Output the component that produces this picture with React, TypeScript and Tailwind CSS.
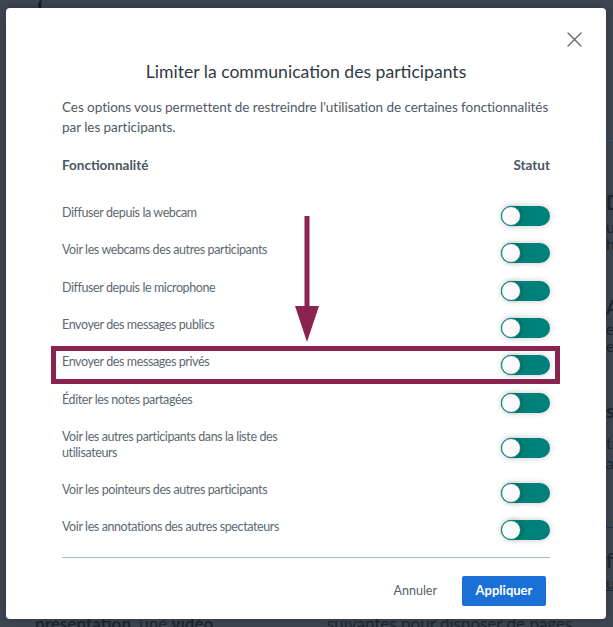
import React from "react";

const features: string[] = [
  "Diffuser depuis la webcam",
  "Voir les webcams des autres participants",
  "Diffuser depuis le microphone",
  "Envoyer des messages publics",
  "Envoyer des messages privés",
  "Éditer les notes partagées",
  "Voir les autres participants dans la liste des utilisateurs",
  "Voir les pointeurs des autres participants",
  "Voir les annotations des autres spectateurs",
];

function Toggle() {
  return (
    <span className="flex h-5 w-[49px] shrink-0 items-center rounded-full bg-[#00807a] shadow-[0_0_6px_rgba(0,0,0,0.22)]">
      <span className="h-5 w-5 rounded-full border border-[#00807a] bg-[#fafafa] shadow-[2px_0_4px_rgba(0,0,0,0.18)]" />
    </span>
  );
}

function CloseIcon() {
  return (
    <svg width="15" height="15" viewBox="0 0 15 15" fill="none" aria-hidden>
      <path d="M1 1L14 14M14 1L1 14" stroke="#5f6a74" strokeWidth="1.4" strokeLinecap="round" />
    </svg>
  );
}

function Backdrop() {
  return (
    <div className="flex h-full w-full text-[#1d2731]">
      <div className="flex w-[606px] shrink-0 flex-col justify-between">
        <div className="ml-[38px] h-[10px] w-[8px] rounded-l-full border-l-[3px] border-[#141c24]" />
        <div className="flex translate-y-[6px] items-end pl-[35px] text-[17px] leading-[18px]">
          <span className="w-[292px]">
            <b>présentation</b>, une <b>vidéo</b>,
          </span>
          <span>suivantes pour disposer de pages</span>
        </div>
      </div>
      <div className="flex flex-1 flex-col pt-[140px] text-[16px] leading-[17px]">
        <div className="h-px bg-[#2a5b72]" />
        <div className="mt-[50px] text-[20px] font-bold leading-[22px]">D</div>
        <div className="mt-[5px]">u</div>
        <div>h</div>
        <div className="mt-[44px] text-[19px] font-bold leading-[22px]">A</div>
        <div className="mt-[2px]">e</div>
        <div>e</div>
        <div className="mt-[46px] text-[19px] font-bold leading-[22px]">s</div>
        <div className="mt-[12px]">tr</div>
        <div className="mt-[3px]">a</div>
        <div className="mt-[56px] h-px bg-[#1b3a4a]" />
        <div className="mt-[20px] text-[21px] leading-[24px]">fo</div>
        <div className="mt-[2px] underline">u</div>
      </div>
    </div>
  );
}

export default function App() {
  return (
    <div
      className="relative h-[627px] w-[613px] overflow-hidden bg-[#3d4752]"
      style={{ fontFamily: "Lato, 'Noto Sans', sans-serif" }}
    >
      <Backdrop />

      {/* modal */}
      <div className="absolute left-[6px] top-[8px] flex h-[611px] w-[600px] flex-col rounded-[4px] bg-white px-[56px] pt-[50px] shadow-[0_0_12px_rgba(0,0,0,0.25)]">
        <button type="button" className="absolute right-[24px] top-[24px] p-0" aria-label="Fermer">
          <CloseIcon />
        </button>

        <h2 className="text-center text-[17.6px] leading-[28px] text-[#2f3a44]">
          Limiter la communication des participants
        </h2>
        <p className="mt-[11px] text-[13.5px] leading-[20px] tracking-[-0.05px] text-[#4e5964]">
          Ces options vous permettent de restreindre l'utilisation de certaines fonctionnalités par les participants.
        </p>

        <div className="mt-[18px] flex items-center justify-between text-[13.5px] font-bold leading-[20px] text-[#4a5560]">
          <span>Fonctionnalité</span>
          <span>Statut</span>
        </div>

        <ul className="mt-[22.5px]">
          {features.map((f) => (
            <li key={f} className="flex items-center justify-between py-[7.65px]">
              <span className="max-w-[262px] pb-[6px] text-[12.5px] leading-[16px] tracking-[-0.4px] text-[#5d6872]">
                {f}
              </span>
              <Toggle />
            </li>
          ))}
        </ul>

        <div className="mt-[8px] h-px bg-[#a9b5c2]" />

        <div className="mt-[18px] flex items-center justify-end gap-[25px] pr-[4px]">
          <button type="button" className="text-[12.5px] text-[#555f69]">
            Annuler
          </button>
          <button
            type="button"
            className="h-[30px] w-[84px] rounded-[2px] bg-[#1b70d8] text-[13px] font-bold text-white"
          >
            Appliquer
          </button>
        </div>
      </div>

      {/* annotation overlay */}
      <div className="absolute left-[51px] top-[346px] h-[38px] w-[509px] border-[5px] border-[#8b2350]" />
      <svg
        className="absolute left-[293px] top-[214px]"
        width="28"
        height="130"
        viewBox="0 0 28 130"
        aria-hidden
      >
        <rect x="11.5" y="2" width="5" height="92" fill="#8b2350" />
        <path d="M2 92H26L14 128Z" fill="#8b2350" />
      </svg>
    </div>
  );
}
